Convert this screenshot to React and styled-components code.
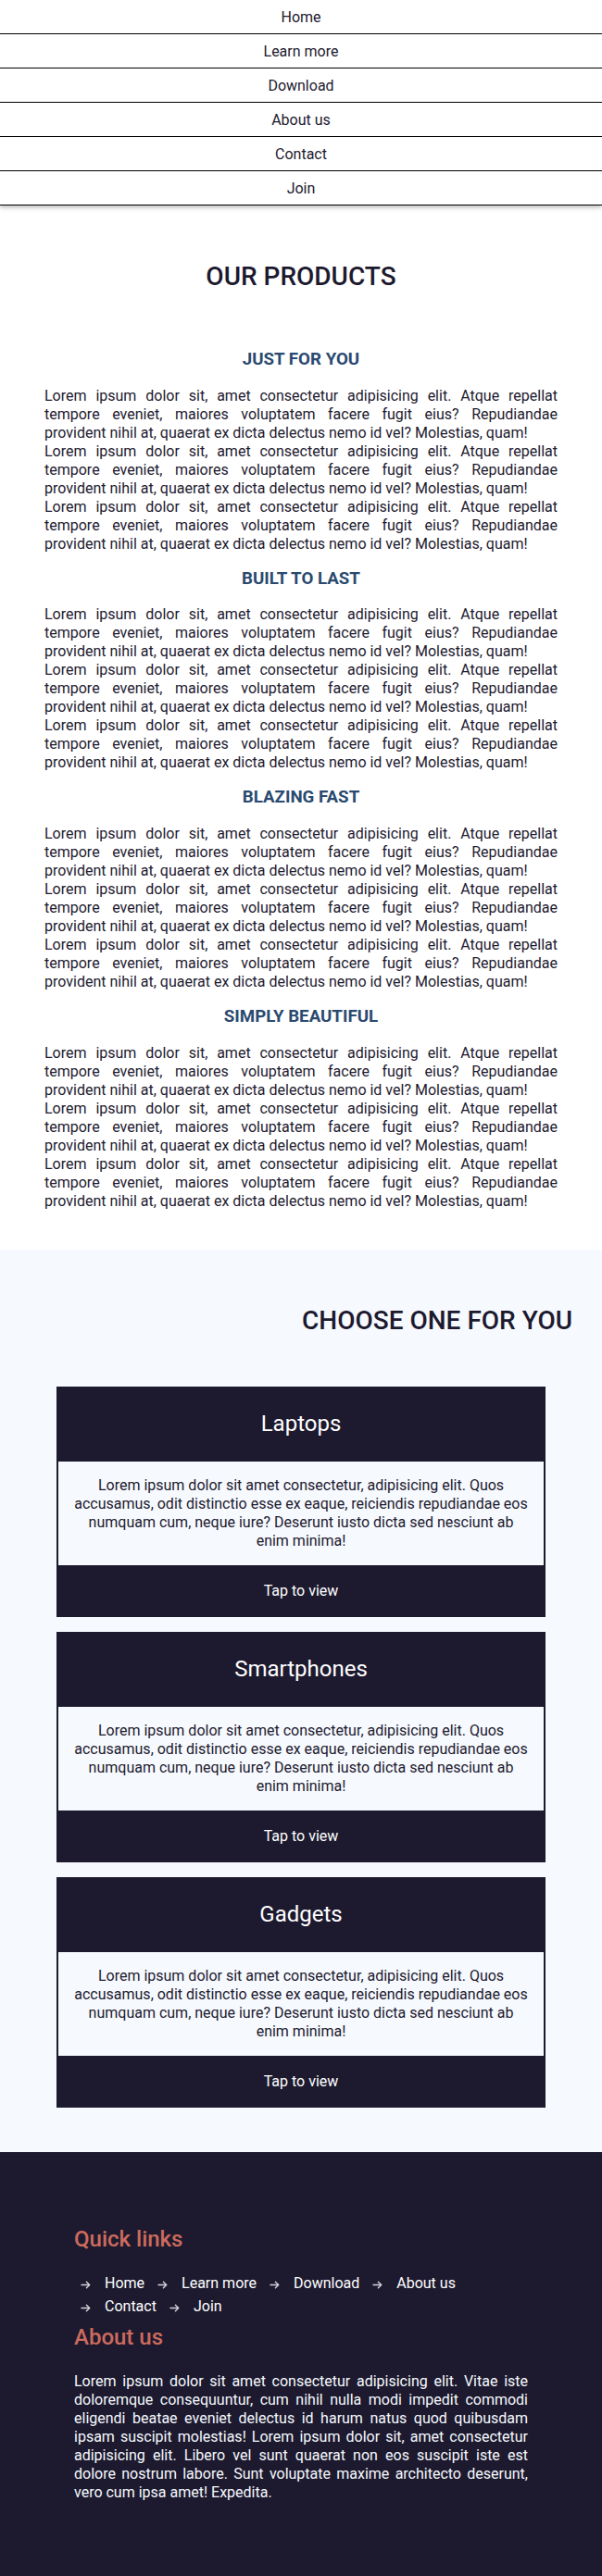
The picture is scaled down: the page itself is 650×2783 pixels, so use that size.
import React from "react";
import styled, { createGlobalStyle } from "styled-components";

const dark = "#1d1a2f";
const light = "#f6f9fe";

const GlobalStyle = createGlobalStyle`
  * { box-sizing: border-box; }
  body {
    margin: 0;
    background: #ffffff;
    color: ${dark};
    font-family: Roboto, "Noto Sans", "Liberation Sans", sans-serif;
    font-size: 16px;
  }
`;

const Nav = styled.nav`
  display: flex;
  flex-direction: column;
  background: #ffffff;
  box-shadow: 0 2px 5px rgba(0, 0, 0, 0.28);
  position: relative;
  z-index: 1;
`;

const NavLink = styled.a`
  display: flex;
  align-items: center;
  justify-content: center;
  height: 37px;
  border-bottom: 1px solid #000000;
  color: ${dark};
  font-size: 16px;
  text-decoration: none;
`;

const Products = styled.section`
  padding: 60px 48px 42px;
  background: #ffffff;
`;

const SectionTitle = styled.h2`
  margin: 0;
  font-size: 28px;
  font-weight: 500;
  line-height: 33px;
  color: ${dark};
  text-align: ${(p) => p.$align || "center"};
`;

const ProductList = styled.div`
  display: flex;
  flex-direction: column;
  gap: 16px;
  margin-top: 62px;
`;

const Product = styled.article`
  display: flex;
  flex-direction: column;
`;

const ProductTitle = styled.h3`
  margin: 0 0 18.7px;
  font-size: 18.72px;
  font-weight: 700;
  line-height: 22px;
  color: #2a4a70;
  text-align: center;
`;

const ProductText = styled.p`
  margin: 0;
  font-size: 16px;
  line-height: 20px;
  text-align: justify;
  color: ${dark};
`;

const Choose = styled.section`
  background: ${light};
  padding: 60px 32px 48px;
`;

const CardList = styled.div`
  display: flex;
  flex-direction: column;
  gap: 16px;
  margin: 55px 29px 0;
`;

const Card = styled.div`
  display: flex;
  flex-direction: column;
  background: ${dark};
  border: 2px solid ${dark};
  border-top: 0;
  border-bottom: 0;
`;

const CardHead = styled.h4`
  margin: 0;
  padding: 26px 0;
  font-size: 24px;
  font-weight: 400;
  line-height: 29px;
  color: #ffffff;
  text-align: center;
`;

const CardBody = styled.p`
  margin: 0;
  padding: 16px;
  background: ${light};
  font-size: 16px;
  line-height: 20px;
  text-align: center;
  color: ${dark};
`;

const CardFoot = styled.a`
  display: block;
  padding: 18px 0;
  font-size: 16px;
  line-height: 20px;
  color: #ffffff;
  text-align: center;
  text-decoration: none;
`;

const Footer = styled.footer`
  background: ${dark};
  padding: 80px;
  color: #ffffff;
`;

const FooterTitle = styled.h4`
  margin: 0 0 ${(p) => p.$gap || "21px"};
  font-size: 24px;
  font-weight: 500;
  line-height: 28px;
  color: #cc6a5d;
`;

const LinkList = styled.ul`
  display: flex;
  flex-wrap: wrap;
  list-style: none;
  margin: 0 0 7px;
  padding: 0;
`;

const LinkItem = styled.li`
  display: flex;
  align-items: center;
  padding: 0 7px;
  line-height: 25px;
  font-size: 16px;
`;

const Arrow = styled.svg`
  width: 11px;
  height: 10px;
  margin-right: 15px;
  margin-top: 3px;
  flex: none;
`;

const FooterLink = styled.a`
  color: #ffffff;
  text-decoration: none;
`;

const AboutText = styled.p`
  margin: 0;
  font-size: 16px;
  line-height: 20px;
  text-align: justify;
  color: ${light};
`;

const navItems = ["Home", "Learn more", "Download", "About us", "Contact", "Join"];

const lorem =
  "Lorem ipsum dolor sit, amet consectetur adipisicing elit. Atque repellat tempore eveniet, maiores voluptatem facere fugit eius? Repudiandae provident nihil at, quaerat ex dicta delectus nemo id vel? Molestias, quam!";

const products = ["JUST FOR YOU", "BUILT TO LAST", "BLAZING FAST", "SIMPLY BEAUTIFUL"];

const cardText =
  "Lorem ipsum dolor sit amet consectetur, adipisicing elit. Quos accusamus, odit distinctio esse ex eaque, reiciendis repudiandae eos numquam cum, neque iure? Deserunt iusto dicta sed nesciunt ab enim minima!";

const cards = ["Laptops", "Smartphones", "Gadgets"];

const aboutText =
  "Lorem ipsum dolor sit amet consectetur adipisicing elit. Vitae iste doloremque consequuntur, cum nihil nulla modi impedit commodi eligendi beatae eveniet delectus id harum natus quod quibusdam ipsam suscipit molestias! Lorem ipsum dolor sit, amet consectetur adipisicing elit. Libero vel sunt quaerat non eos suscipit iste est dolore nostrum labore. Sunt voluptate maxime architecto deserunt, vero cum ipsa amet! Expedita.";

function ArrowIcon() {
  return (
    <Arrow viewBox="0 0 11 10" fill="none" stroke="#d4d3dc" strokeWidth="1.4" strokeLinecap="round" strokeLinejoin="round">
      <path d="M1 5.5H9.6" />
      <path d="M6.4 2.3L9.6 5.5L6.4 8.7" />
    </Arrow>
  );
}

export default function App() {
  return (
    <>
      <GlobalStyle />
      <Nav>
        {navItems.map((item) => (
          <NavLink key={item} href="#">
            {item}
          </NavLink>
        ))}
      </Nav>

      <Products>
        <SectionTitle>OUR PRODUCTS</SectionTitle>
        <ProductList>
          {products.map((title) => (
            <Product key={title}>
              <ProductTitle>{title}</ProductTitle>
              <ProductText>{lorem}</ProductText>
              <ProductText>{lorem}</ProductText>
              <ProductText>{lorem}</ProductText>
            </Product>
          ))}
        </ProductList>
      </Products>

      <Choose>
        <SectionTitle $align="right">CHOOSE ONE FOR YOU</SectionTitle>
        <CardList>
          {cards.map((c) => (
            <Card key={c}>
              <CardHead>{c}</CardHead>
              <CardBody>{cardText}</CardBody>
              <CardFoot href="#">Tap to view</CardFoot>
            </Card>
          ))}
        </CardList>
      </Choose>

      <Footer>
        <FooterTitle>Quick links</FooterTitle>
        <LinkList>
          {navItems.map((item) => (
            <LinkItem key={item}>
              <ArrowIcon />
              <FooterLink href="#">{item}</FooterLink>
            </LinkItem>
          ))}
        </LinkList>
        <FooterTitle $gap="24px">About us</FooterTitle>
        <AboutText>{aboutText}</AboutText>
      </Footer>
    </>
  );
}
